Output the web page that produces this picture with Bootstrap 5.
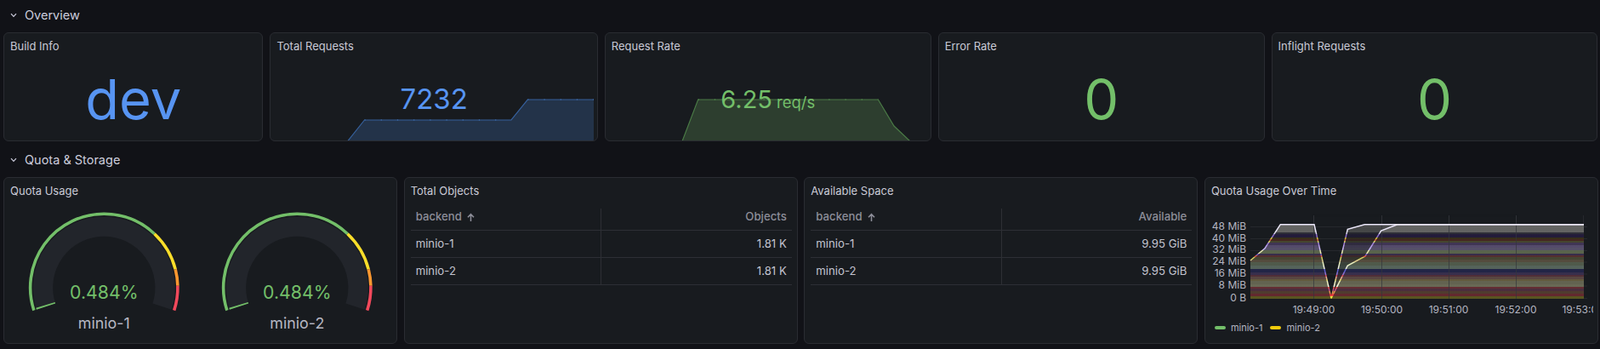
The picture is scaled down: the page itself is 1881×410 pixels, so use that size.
<!DOCTYPE html>
<html lang="en">
<head>
    <meta charset="UTF-8">
    <meta name="viewport" content="width=device-width, initial-scale=1.0">
    <title>Gateway Dashboard</title>
    <link href="https://cdn.jsdelivr.net/npm/bootstrap@5.3.0/dist/css/bootstrap.min.css" rel="stylesheet">
    <style>
        html, body {
            height: 410px;
            overflow: hidden;
        }

        body {
            font-family: "Inter", "Liberation Sans", sans-serif;
            background-color: #111217;
            color: #ccccdc;
            font-size: 13px;
        }

        .section-header {
            height: 36px;
            padding-left: 12px;
            gap: 9px;
            margin-top: 0;
            margin-bottom: 2px;
            font-size: 14.5px;
            font-weight: 400;
        }

        .section-header.second {
            margin-top: 4px;
        }

        .section-header svg {
            width: 8px;
            height: 6px;
        }

        .stat-row {
            display: grid;
            grid-template-columns: 305.5fr 385.5fr 384fr 384fr 384fr;
            gap: 8px;
            height: 128px;
            padding: 0 2.5px 0 4px;
        }

        .bottom-row {
            display: grid;
            grid-template-columns: repeat(4, 1fr);
            gap: 7.5px;
            height: 196px;
            padding: 0 2px 0 4px;
        }

        .panel {
            --bs-card-bg: #181b1f;
            --bs-card-border-color: #2a2c32;
            --bs-card-border-radius: 6px;
            --bs-card-inner-border-radius: 5px;
            overflow: hidden;
        }

        .panel-title {
            height: 31px;
            padding: 0 7px;
            color: #c8c9d5;
            font-size: 13px;
            font-weight: 400;
            line-height: 30px;
            flex-shrink: 0;
        }

        .stat-value {
            position: relative;
            line-height: 1;
            font-weight: 400;
            margin-bottom: 2px;
        }

        .value-blue { color: #5794f2; }
        .value-green { color: #73bf69; }
        .value-huge { font-size: 65px; }
        .value-mid { font-size: 33px; }
        .value-rate { font-size: 29px; margin-bottom: 2px; }
        .value-rate small { font-size: 18.5px; margin-left: 5px; }

        .spark {
            position: absolute;
            left: -1px;
            bottom: -1px;
            display: block;
        }

        .gauge-svg {
            display: block;
            width: 100%;
            height: 160px;
        }

        .gauge-svg .gauge-value {
            font-size: 21.4px;
            fill: #73bf69;
            text-anchor: middle;
        }

        .gauge-svg .gauge-name {
            font-size: 18px;
            fill: #b6b7c3;
            text-anchor: middle;
        }

        .table-wrap {
            padding: 0 6px 0 7px;
        }

        .table.data-table {
            --bs-table-bg: transparent;
            --bs-table-color: #c3c4d0;
            --bs-table-border-color: #2d2f35;
            margin: 5px 0 0;
            font-size: 13.2px;
            table-layout: fixed;
        }

        .data-table th,
        .data-table td {
            padding: 0 6px;
            vertical-align: middle;
            line-height: 1;
        }

        .data-table th {
            height: 25px;
            padding-bottom: 6px;
            color: #8c8d98;
            font-weight: 500;
        }

        .data-table td {
            height: 32px;
            padding-top: 1px;
        }

        .data-table th:first-child,
        .data-table td:first-child {
            border-right: 1px solid #2d2f35;
        }

        .data-table .sort-arrow {
            width: 11px;
            height: 11px;
            margin-left: 5px;
        }

        .chart-svg {
            display: block;
            flex-shrink: 0;
        }

        .chart-svg text {
            font-size: 12px;
            fill: #b4b5c1;
        }

        .legend {
            padding-left: 11px;
            margin-top: 4px;
            gap: 6px;
            font-size: 11px;
            color: #b4b5c1;
        }

        .legend-pill {
            width: 13px;
            height: 4px;
            border-radius: 2px;
        }

        .legend-pill.green { background: #73bf69; }
        .legend-pill.yellow { background: #f2cc0c; margin-left: 3px; }
    </style>
</head>
<body>
    <!-- Overview -->
    <div class="section-header d-flex align-items-center">
        <svg viewBox="0 0 8 6"><path d="M1 1.2 4 4.4 7 1.2" fill="none" stroke="#ccccdc" stroke-width="1.2"/></svg>
        <span>Overview</span>
    </div>
    <div class="stat-row">
        <div class="card panel">
            <div class="panel-title">Build Info</div>
            <div class="flex-grow-1 d-flex align-items-center justify-content-center">
                <span class="stat-value value-blue value-huge">dev</span>
            </div>
        </div>
        <div class="card panel position-relative">
            <svg class="spark" width="386" height="128" viewBox="0 0 386 128">
                <path d="M92 128 111.5 103H284L303.3 79H381V128Z" fill="#233349"/>
                <path d="M0 127.5H92L111.5 103H284L303.3 79H381" fill="none" stroke="#36609c" stroke-width="1.2"/>
                <path d="M0 127.5H92" fill="none" stroke="#1d2d42" stroke-width="1"/>
                <path d="M111.5 103H284M303.3 79H381" fill="none" stroke="#3a659f" stroke-width="1.6" stroke-dasharray="1.2 18"/>
            </svg>
            <div class="panel-title position-relative">Total Requests</div>
            <div class="flex-grow-1 d-flex align-items-center justify-content-center">
                <span class="stat-value value-blue value-mid">7232</span>
            </div>
        </div>
        <div class="card panel position-relative">
            <svg class="spark" width="385" height="128" viewBox="0 0 385 128">
                <path d="M91 128 109.7 79H321.4L340 110 359 128Z" fill="#2d3e2f"/>
                <path d="M91 128 109.7 79H321.4L340 110 359 128" fill="none" stroke="#4a7a46" stroke-width="1.2"/>
                <path d="M0 127.5H91M359 127.5H385" fill="none" stroke="#263528" stroke-width="1"/>
                <path d="M109.7 79H321.4" fill="none" stroke="#4d8049" stroke-width="1.6" stroke-dasharray="1.2 18"/>
            </svg>
            <div class="panel-title position-relative">Request Rate</div>
            <div class="flex-grow-1 d-flex align-items-center justify-content-center">
                <span class="stat-value value-green value-rate">6.25<small>req/s</small></span>
            </div>
        </div>
        <div class="card panel">
            <div class="panel-title">Error Rate</div>
            <div class="flex-grow-1 d-flex align-items-center justify-content-center">
                <span class="stat-value value-green value-huge">0</span>
            </div>
        </div>
        <div class="card panel">
            <div class="panel-title">Inflight Requests</div>
            <div class="flex-grow-1 d-flex align-items-center justify-content-center">
                <span class="stat-value value-green value-huge">0</span>
            </div>
        </div>
    </div>

    <!-- Quota & Storage -->
    <div class="section-header second d-flex align-items-center">
        <svg viewBox="0 0 8 6"><path d="M1 1.2 4 4.4 7 1.2" fill="none" stroke="#ccccdc" stroke-width="1.2"/></svg>
        <span>Quota &amp; Storage</span>
    </div>
    <div class="bottom-row">
        <div class="card panel">
            <div class="panel-title">Quota Usage</div>
            <div class="row g-0 px-1">
                <div class="col-6">
                    <svg class="gauge-svg" viewBox="0 0 228 160">
                        <path d="M45.29 120.33A72.25 72.25 0 1 1 182.71 120.33" fill="none" stroke="#22252b" stroke-width="23.5"/>
                        <path d="M45.29 120.33A72.25 72.25 0 1 1 182.71 120.33" fill="none" stroke="#73bf69" stroke-width="23.5" pathLength="100" stroke-dasharray="0.7 100"/>
                        <path d="M31.07 124.95A87.2 87.2 0 1 1 196.93 124.95" fill="none" stroke="#73bf69" stroke-width="3.6" pathLength="100" stroke-dasharray="70 100"/>
                        <path d="M31.07 124.95A87.2 87.2 0 1 1 196.93 124.95" fill="none" stroke="#fade2a" stroke-width="3.6" pathLength="100" stroke-dasharray="0 70 15 100"/>
                        <path d="M31.07 124.95A87.2 87.2 0 1 1 196.93 124.95" fill="none" stroke="#ff9830" stroke-width="3.6" pathLength="100" stroke-dasharray="0 85 6 100"/>
                        <path d="M31.07 124.95A87.2 87.2 0 1 1 196.93 124.95" fill="none" stroke="#f2495c" stroke-width="3.6" pathLength="100" stroke-dasharray="0 91 9 100"/>
                        <text class="gauge-value" x="114" y="110.7">0.484%</text>
                        <text class="gauge-name" x="114" y="146">minio-1</text>
                    </svg>
                </div>
                <div class="col-6">
                    <svg class="gauge-svg" viewBox="0 0 228 160">
                        <path d="M45.29 120.33A72.25 72.25 0 1 1 182.71 120.33" fill="none" stroke="#22252b" stroke-width="23.5"/>
                        <path d="M45.29 120.33A72.25 72.25 0 1 1 182.71 120.33" fill="none" stroke="#73bf69" stroke-width="23.5" pathLength="100" stroke-dasharray="0.7 100"/>
                        <path d="M31.07 124.95A87.2 87.2 0 1 1 196.93 124.95" fill="none" stroke="#73bf69" stroke-width="3.6" pathLength="100" stroke-dasharray="70 100"/>
                        <path d="M31.07 124.95A87.2 87.2 0 1 1 196.93 124.95" fill="none" stroke="#fade2a" stroke-width="3.6" pathLength="100" stroke-dasharray="0 70 15 100"/>
                        <path d="M31.07 124.95A87.2 87.2 0 1 1 196.93 124.95" fill="none" stroke="#ff9830" stroke-width="3.6" pathLength="100" stroke-dasharray="0 85 6 100"/>
                        <path d="M31.07 124.95A87.2 87.2 0 1 1 196.93 124.95" fill="none" stroke="#f2495c" stroke-width="3.6" pathLength="100" stroke-dasharray="0 91 9 100"/>
                        <text class="gauge-value" x="114" y="110.7">0.484%</text>
                        <text class="gauge-name" x="114" y="146">minio-2</text>
                    </svg>
                </div>
            </div>
        </div>

        <div class="card panel">
            <div class="panel-title">Total Objects</div>
            <div class="table-wrap">
                <table class="table data-table">
                    <thead>
                        <tr>
                            <th>backend<svg class="sort-arrow" viewBox="0 0 10 10"><path d="M5 9V1.5M1.8 4.7 5 1.5 8.2 4.7" fill="none" stroke="currentColor" stroke-width="1.4"/></svg></th>
                            <th class="text-end">Objects</th>
                        </tr>
                    </thead>
                    <tbody>
                        <tr><td>minio-1</td><td class="text-end">1.81 K</td></tr>
                        <tr><td>minio-2</td><td class="text-end">1.81 K</td></tr>
                    </tbody>
                </table>
            </div>
        </div>

        <div class="card panel">
            <div class="panel-title">Available Space</div>
            <div class="table-wrap">
                <table class="table data-table">
                    <thead>
                        <tr>
                            <th>backend<svg class="sort-arrow" viewBox="0 0 10 10"><path d="M5 9V1.5M1.8 4.7 5 1.5 8.2 4.7" fill="none" stroke="currentColor" stroke-width="1.4"/></svg></th>
                            <th class="text-end">Available</th>
                        </tr>
                    </thead>
                    <tbody>
                        <tr><td>minio-1</td><td class="text-end">9.95 GiB</td></tr>
                        <tr><td>minio-2</td><td class="text-end">9.95 GiB</td></tr>
                    </tbody>
                </table>
            </div>
        </div>

        <div class="card panel">
            <div class="panel-title">Quota Usage Over Time</div>
            <svg class="chart-svg" width="463" height="133" viewBox="1416 239 463 133">
                <defs>
                    <linearGradient id="bandFill" gradientUnits="userSpaceOnUse" x1="0" y1="262" x2="0" y2="350"></linearGradient>
                    <linearGradient id="bandLine" gradientUnits="userSpaceOnUse" x1="0" y1="262" x2="0" y2="350"></linearGradient>
                    <clipPath id="plotClip"><rect x="1416" y="239" width="456" height="133"/></clipPath>
                </defs>
                <g stroke="#26282d" stroke-width="1">
                    <path d="M1469 265.5H1865M1469 279.5H1865M1469 293.5H1865M1469 307H1865M1469 321H1865M1469 335H1865M1469 349.5H1865"/>
                    <path d="M1543.5 252V350M1623.5 252V350M1702.5 252V350M1781.5 252V350M1860.5 252V350"/>
                </g>
                <!-- two stacked fills, same area up to the dip -->
                <path fill="url(#bandFill)" d="M1469 305 1486 290.7 1504.3 262.7H1544L1564 349.3 1583.3 268.3 1603.3 262.7H1861V350H1469Z" opacity=".55"/>
                <path fill="url(#bandFill)" d="M1469 305 1486 290.7 1504.3 262.7H1544L1564 349.3 1583.3 311 1604 300 1622.7 270 1641.7 262.7H1861V350H1469Z" opacity=".8"/>
                <g stroke="#33353b" stroke-width="1" opacity=".7">
                    <path d="M1543.5 252V350M1623.5 252V350M1702.5 252V350M1781.5 252V350"/>
                </g>
                <path fill="none" stroke="url(#bandLine)" stroke-width="1.5" d="M1469 305 1486 290.7 1504.3 262.7H1544L1564 349.3 1583.3 268.3 1603.3 262.7H1861"/>
                <path fill="none" stroke="url(#bandLine)" stroke-width="1.5" d="M1564 349.3 1583.3 311 1604 300 1622.7 270 1641.7 262.7H1861"/>
                <g text-anchor="end">
                    <text x="1464" y="268.5">48 MiB</text>
                    <text x="1464" y="282.5">40 MiB</text>
                    <text x="1464" y="296">32 MiB</text>
                    <text x="1464" y="309.5">24 MiB</text>
                    <text x="1464" y="323.5">16 MiB</text>
                    <text x="1464" y="337.5">8 MiB</text>
                    <text x="1464" y="352.5">0 B</text>
                </g>
                <g text-anchor="middle" clip-path="url(#plotClip)">
                    <text x="1543.5" y="366.5">19:49:00</text>
                    <text x="1623.5" y="366.5">19:50:00</text>
                    <text x="1702" y="366.5">19:51:00</text>
                    <text x="1781" y="366.5">19:52:00</text>
                    <text x="1860" y="366.5">19:53:00</text>
                </g>
            </svg>
            <div class="legend d-flex align-items-center">
                <span class="legend-pill green"></span>
                <span>minio-1</span>
                <span class="legend-pill yellow"></span>
                <span>minio-2</span>
            </div>
        </div>
    </div>

    <script>
        // stripes of the threshold gradient, from the top of the plot down: [height px, fill, line]
        const bands = [
            [10, "#6a6a68", "#ece8fa"], [2, "#30303a", "#d8d4e8"], [4, "#241c3c", "#8e6fc8"],
            [2, "#3a3018", "#d8c040"], [2, "#4a2820", "#d86040"], [3, "#4a4a30", "#d8d070"],
            [3, "#44385a", "#a080d8"], [3, "#5a4f72", "#b8a0e8"], [3, "#5c5670", "#c8b8f0"],
            [4, "#5f6a50", "#e8e8b0"], [2, "#3b2f4f", "#8060c0"], [2, "#5a3030", "#e06050"],
            [3, "#4a4a35", "#d0d060"], [3, "#5a5040", "#e0d090"], [4, "#55604f", "#e8f0c0"],
            [4, "#5b6a60", "#f0f0e0"], [4, "#23264a", "#6060d0"], [3, "#3a3050", "#9070d0"],
            [2, "#55303a", "#e05060"], [3, "#5f4a45", "#e8b090"], [3, "#6a6040", "#e8e070"],
            [4, "#6a6a55", "#f0f0c0"], [3, "#70705a", "#f8f8e0"], [2, "#6b2f35", "#f05050"],
            [3, "#503040", "#c05080"], [3, "#553f30", "#e09050"], [3, "#6b2a30", "#f04040"],
            [3, "#5f5a20", "#e8e040"]
        ];

        function buildStops(gradientId, colorIndex) {
            const gradient = document.getElementById(gradientId);
            const total = bands.reduce((sum, band) => sum + band[0], 0);
            let offset = 0;
            bands.forEach(band => {
                [offset, offset + band[0]].forEach(edge => {
                    const stop = document.createElementNS("http://www.w3.org/2000/svg", "stop");
                    stop.setAttribute("offset", edge / total);
                    stop.setAttribute("stop-color", band[colorIndex]);
                    gradient.appendChild(stop);
                });
                offset += band[0];
            });
        }

        buildStops("bandFill", 1);
        buildStops("bandLine", 2);
    </script>
    <script src="https://cdn.jsdelivr.net/npm/bootstrap@5.3.0/dist/js/bootstrap.bundle.min.js"></script>
</body>
</html>
